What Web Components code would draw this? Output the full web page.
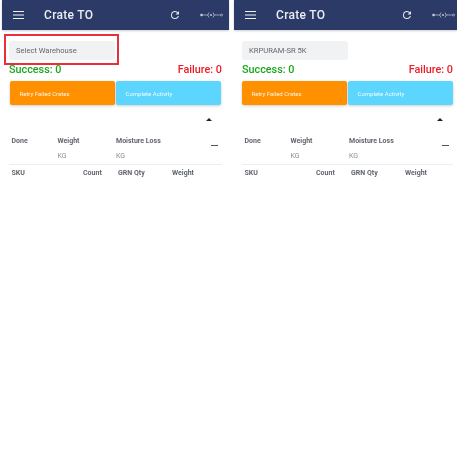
<!DOCTYPE html>
<html>
<head>
<meta charset="utf-8">
<title>Crate TO</title>
<style>
  html, body { margin: 0; background: #fff; }
  body { display: flex; width: 457px; height: 458px; overflow: hidden; font-family: Roboto, sans-serif; }
  crate-screen:first-child { margin-left: 2px; width: 227px; margin-right: 5px; }
  crate-screen:last-child { width: 223px; }
</style>
</head>
<body>
<crate-screen warehouse="Select Warehouse" marked></crate-screen>
<crate-screen warehouse="KRPURAM-SR 5K" shifted></crate-screen>

<script>
class AppBar extends HTMLElement {
  connectedCallback() {
    this.attachShadow({ mode: 'open' });
    this.shadowRoot.innerHTML = `
      <style>
        :host {
          display: flex; align-items: center; height: 30px; background: #2b3a67;
          color: #fff; box-shadow: 0 1px 2px rgba(0,0,0,.2);
        }
        svg { display: block; flex: none; }
        .menu { margin-left: 11px; }
        .title { margin-left: 19px; font-size: 12px; font-weight: 500; letter-spacing: .3px; flex: 1; color: #eceef3; }
        .refresh { margin-right: 19px; }
        .route { margin-right: var(--route-right, 5px); }
      </style>
      <svg class="menu" width="12" height="10" viewBox="0 0 12 10"><path d="M0 1.5h11M0 5h11M0 8.5h11" stroke="#f0f1f5" stroke-width="1.2"/></svg>
      <span class="title"><slot></slot></span>
      <svg class="refresh" width="12" height="12" viewBox="0 0 24 24"><path fill="#e2e4ec" d="M17.65 6.35A7.96 7.96 0 0 0 12 4a8 8 0 1 0 7.75 10h-2.08A6 6 0 1 1 12 6c1.66 0 3.14.69 4.22 1.78L13 11h7V4z"/></svg>
      <svg class="route" width="24" height="8" viewBox="0 0 24 8" fill="none" stroke="#c4c8d8" stroke-width=".7"><circle cx="1.5" cy="4" r="1" fill="#d5d8e4"/><path d="M2 4h6M14 4h6"/><path d="M9 1.5a3.5 3.5 0 0 0 0 5M13 1.5a3.5 3.5 0 0 1 0 5"/><circle cx="11" cy="4" r=".7" fill="#c4c8d8"/><circle cx="21.5" cy="4" r="1"/></svg>`;
  }
}

class SelectField extends HTMLElement {
  connectedCallback() {
    this.attachShadow({ mode: 'open' });
    this.shadowRoot.innerHTML = `
      <style>
        :host {
          display: flex; align-items: center; box-sizing: border-box; width: 106px; height: 19px;
          padding-left: 7px; background: #f1f2f4; border-radius: 3px; color: #63666b; font-size: 7.6px;
        }
      </style>
      <slot></slot>`;
  }
}

class StatusLine extends HTMLElement {
  connectedCallback() {
    this.attachShadow({ mode: 'open' });
    this.shadowRoot.innerHTML = `
      <style>
        :host { display: flex; justify-content: space-between; font-size: 10.8px; font-weight: 500; line-height: 12px; }
        .ok { color: #1aa81a; }
        .bad { color: #f01a24; }
      </style>
      <span class="ok">Success: 0</span>
      <span class="bad">Failure: 0</span>`;
  }
}

class ActionButton extends HTMLElement {
  connectedCallback() {
    this.attachShadow({ mode: 'open' });
    this.shadowRoot.innerHTML = `
      <style>
        :host {
          display: flex; align-items: center; box-sizing: border-box; width: 105px; height: 24px; padding-left: 9.5px;
          border-radius: 2px; color: rgba(255,255,255,.9); font-size: 6px; background: var(--fill);
          box-shadow: 0 1px 3px rgba(0,0,0,.2);
        }
      </style>
      <slot></slot>`;
  }
}

class CrateTable extends HTMLElement {
  connectedCallback() {
    this.attachShadow({ mode: 'open' });
    this.shadowRoot.innerHTML = `
      <style>
        :host { display: block; font-size: 7px; font-weight: 700; color: #62666e; }
        .toggle { display: flex; justify-content: flex-end; padding-right: 10.5px; }
        .toggle i { width: 0; height: 0; border: 3px solid transparent; border-top: 0; border-bottom: 3.5px solid #222; }
        .summary { display: grid; grid-template-columns: 46px 58.5px 1fr; grid-auto-rows: 15px; align-items: center; position: relative; margin-top: 12px; padding-left: 2.5px; }
        .unit { font-weight: 400; color: #8c8f94; }
        .dash { position: absolute; right: 4px; top: 11.5px; width: 7px; height: 1.5px; background: #555; }
        .items { display: grid; grid-template-columns: 71.5px 35px 54px 1fr; border-top: 1px solid #eeeeef; margin-top: 1px; padding: 4px 0 0 2.5px; line-height: 9px; }
      </style>
      <div class="toggle"><i></i></div>
      <div class="summary">
        <span>Done</span><span>Weight</span><span>Moisture Loss</span>
        <span></span><span class="unit">KG</span><span class="unit">KG</span>
        <div class="dash"></div>
      </div>
      <div class="items"><span>SKU</span><span>Count</span><span>GRN Qty</span><span>Weight</span></div>`;
  }
}

class CrateScreen extends HTMLElement {
  connectedCallback() {
    const warehouse = this.getAttribute('warehouse');
    this.attachShadow({ mode: 'open' });
    this.shadowRoot.innerHTML = `
      <style>
        /* the reference is a scaled-down capture, so everything is slightly soft */
        :host { display: block; position: relative; flex: none; filter: blur(.35px); }
        :host([shifted]) { --route-right: 1px; }
        .body { display: flex; flex-direction: column; padding: 11px 7px 0 7px; }
        :host([shifted]) .body { padding: 11px 4px 0 8px; }
        status-line { margin-top: 4px; }
        .actions { display: flex; gap: 1px; margin: 5px 0 13px 1px; }
        :host([shifted]) .actions { margin-left: 0; }
        .mark { display: none; position: absolute; left: 2px; top: 34px; width: 115px; height: 31px; box-sizing: border-box; border: 2px solid #e8303c; }
        :host([marked]) .mark { display: block; }
      </style>
      <app-bar>Crate TO</app-bar>
      <div class="body">
        <select-field>${warehouse}</select-field>
        <status-line></status-line>
        <div class="actions">
          <action-button style="--fill:#ff9100">Retry Failed Crates</action-button>
          <action-button style="--fill:#5cd6ff">Complete Activity</action-button>
        </div>
        <crate-table></crate-table>
      </div>
      <div class="mark"></div>`;
  }
}

customElements.define('app-bar', AppBar);
customElements.define('select-field', SelectField);
customElements.define('status-line', StatusLine);
customElements.define('action-button', ActionButton);
customElements.define('crate-table', CrateTable);
customElements.define('crate-screen', CrateScreen);
</script>
</body>
</html>
